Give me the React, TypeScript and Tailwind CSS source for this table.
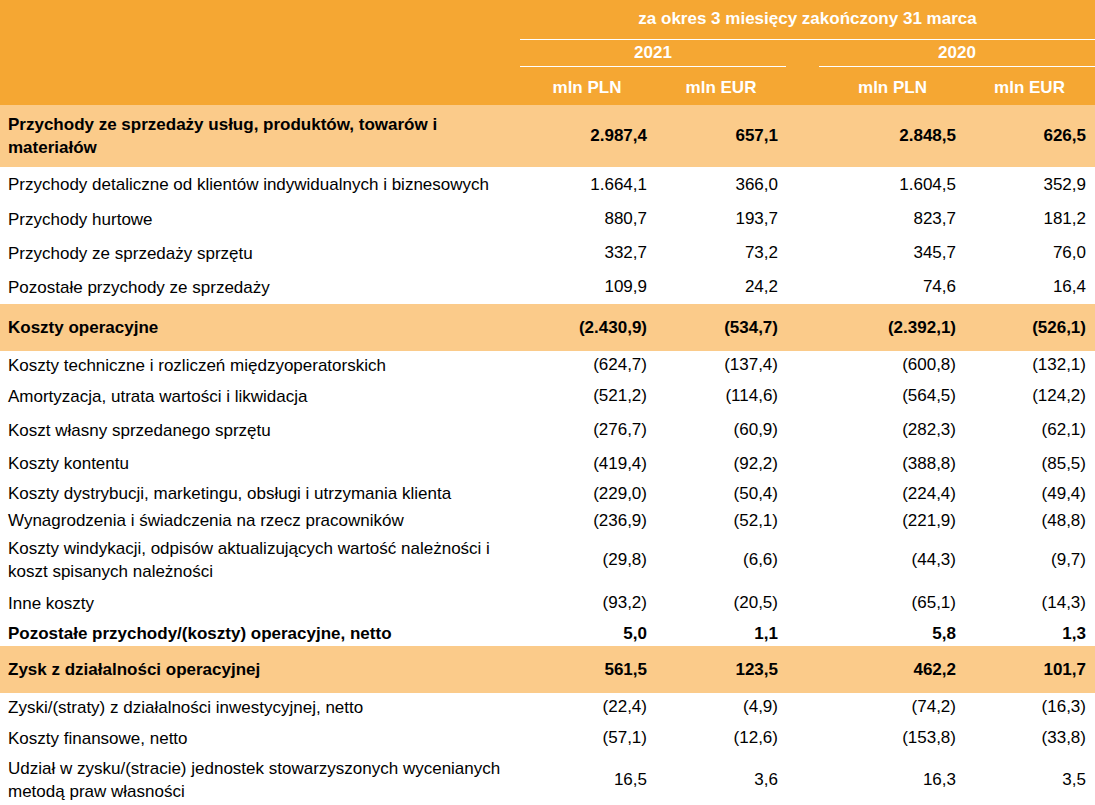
import React from "react";

type Row = {
  label: string[];
  vals: string[];
  h: string;
  band?: boolean;
  bold?: boolean;
};

const rows: Row[] = [
  { label: ["Przychody ze sprzedaży usług, produktów, towarów i", "materiałów"], vals: ["2.987,4", "657,1", "2.848,5", "626,5"], h: "h-[62px]", band: true, bold: true },
  { label: ["Przychody detaliczne od klientów indywidualnych i biznesowych"], vals: ["1.664,1", "366,0", "1.604,5", "352,9"], h: "h-[35px]" },
  { label: ["Przychody hurtowe"], vals: ["880,7", "193,7", "823,7", "181,2"], h: "h-[34px]" },
  { label: ["Przychody ze sprzedaży sprzętu"], vals: ["332,7", "73,2", "345,7", "76,0"], h: "h-[34px]" },
  { label: ["Pozostałe przychody ze sprzedaży"], vals: ["109,9", "24,2", "74,6", "16,4"], h: "h-[34px]" },
  { label: ["Koszty operacyjne"], vals: ["(2.430,9)", "(534,7)", "(2.392,1)", "(526,1)"], h: "h-[47px]", band: true, bold: true },
  { label: ["Koszty techniczne i rozliczeń międzyoperatorskich"], vals: ["(624,7)", "(137,4)", "(600,8)", "(132,1)"], h: "h-[28px]" },
  { label: ["Amortyzacja, utrata wartości i likwidacja"], vals: ["(521,2)", "(114,6)", "(564,5)", "(124,2)"], h: "h-[34px]" },
  { label: ["Koszt własny sprzedanego sprzętu"], vals: ["(276,7)", "(60,9)", "(282,3)", "(62,1)"], h: "h-[34px]" },
  { label: ["Koszty kontentu"], vals: ["(419,4)", "(92,2)", "(388,8)", "(85,5)"], h: "h-[33px]" },
  { label: ["Koszty dystrybucji, marketingu, obsługi i utrzymania klienta"], vals: ["(229,0)", "(50,4)", "(224,4)", "(49,4)"], h: "h-[27px]" },
  { label: ["Wynagrodzenia i świadczenia na rzecz pracowników"], vals: ["(236,9)", "(52,1)", "(221,9)", "(48,8)"], h: "h-[27px]" },
  { label: ["Koszty windykacji, odpisów aktualizujących wartość należności i", "koszt spisanych należności"], vals: ["(29,8)", "(6,6)", "(44,3)", "(9,7)"], h: "h-[51px]" },
  { label: ["Inne koszty"], vals: ["(93,2)", "(20,5)", "(65,1)", "(14,3)"], h: "h-[36px]" },
  { label: ["Pozostałe przychody/(koszty) operacyjne, netto"], vals: ["5,0", "1,1", "5,8", "1,3"], h: "h-[25px]", bold: true },
  { label: ["Zysk z działalności operacyjnej"], vals: ["561,5", "123,5", "462,2", "101,7"], h: "h-[47px]", band: true, bold: true },
  { label: ["Zyski/(straty) z działalności inwestycyjnej, netto"], vals: ["(22,4)", "(4,9)", "(74,2)", "(16,3)"], h: "h-[28px]" },
  { label: ["Koszty finansowe, netto"], vals: ["(57,1)", "(12,6)", "(153,8)", "(33,8)"], h: "h-[34px]" },
  { label: ["Udział w zysku/(stracie) jednostek stowarzyszonych wycenianych", "metodą praw własności"], vals: ["16,5", "3,6", "16,3", "3,5"], h: "h-[50px]" },
];

const grid = "grid grid-cols-[520px_140px_126px_33px_147px_129px]";

export default function App() {
  return (
    <div
      className="w-[1095px] h-[805px] overflow-hidden bg-white text-[17px] text-black"
      style={{ fontFamily: '"Liberation Sans", Arial, sans-serif' }}
    >
      {/* Header */}
      <div className={`${grid} grid-rows-[40px_27px_38px] h-[105px] bg-[#F5A733] text-white font-bold`}>
        <div className="row-span-3" />
        <div className="col-span-5 flex items-center justify-center border-b border-white pb-[2px]">
          za okres 3 miesięcy zakończony 31 marca
        </div>
        <div className="col-span-2 flex items-center justify-center border-b border-white">2021</div>
        <div />
        <div className="col-span-2 flex items-center justify-center border-b border-white">2020</div>
        <div className="flex items-center justify-center pr-[6px] pt-[4px]">mln PLN</div>
        <div className="flex items-center justify-center pr-[4px] pt-[4px]">mln EUR</div>
        <div />
        <div className="flex items-center justify-center pt-[4px]">mln PLN</div>
        <div className="flex items-center justify-center pr-[2px] pt-[4px]">mln EUR</div>
      </div>

      {/* Body */}
      {rows.map((r, i) => (
        <div
          key={i}
          className={`${grid} ${r.h} items-center ${r.band ? "bg-[#FBCB8A]" : ""} ${r.bold ? "font-bold" : ""}`}
        >
          <div className="pl-2 leading-[23px]">
            {r.label.map((l, j) => (
              <div key={j} className="whitespace-nowrap">{l}</div>
            ))}
          </div>
          <div className="text-right pr-[13px]">{r.vals[0]}</div>
          <div className="text-right pr-2">{r.vals[1]}</div>
          <div />
          <div className="text-right pr-[10px]">{r.vals[2]}</div>
          <div className="text-right pr-[9px]">{r.vals[3]}</div>
        </div>
      ))}
    </div>
  );
}
